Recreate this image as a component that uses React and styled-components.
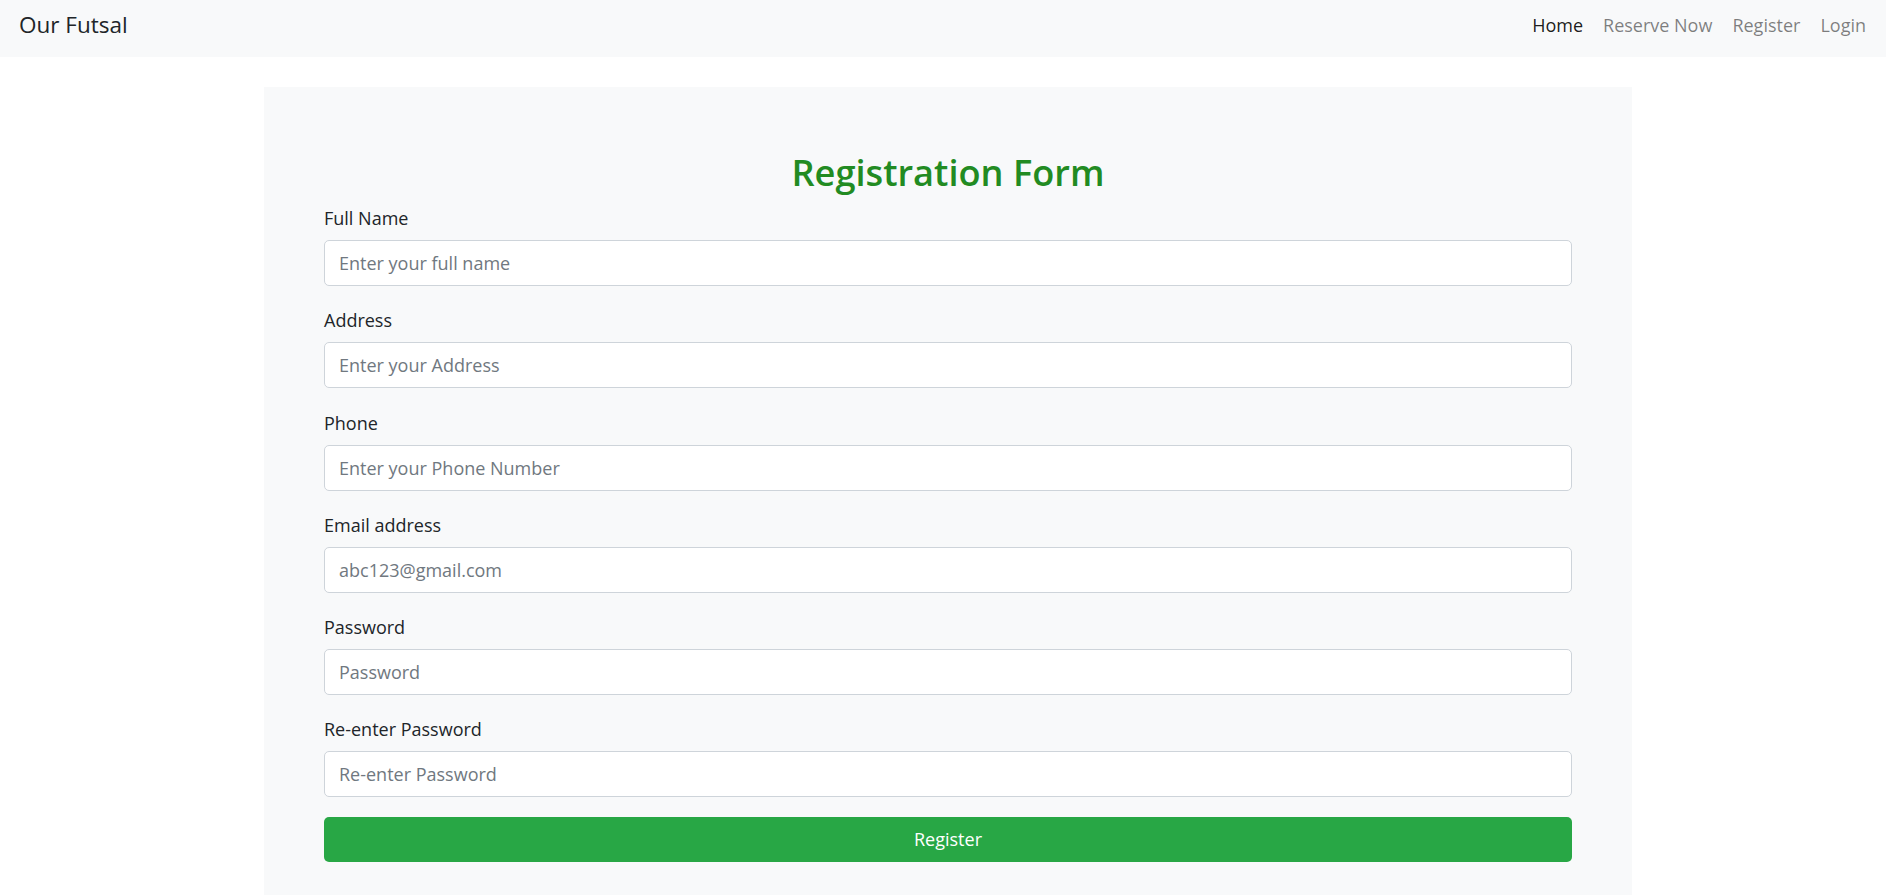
import React from "react";
import styled, { createGlobalStyle } from "styled-components";

const Global = createGlobalStyle`
  html, body { margin: 0; padding: 0; background: #ffffff; }
  body {
    font-family: "Open Sans", "Noto Sans", sans-serif;
    color: #212529;
    -webkit-font-smoothing: antialiased;
  }
  * { box-sizing: border-box; }
`;

const NavBar = styled.nav`
  height: 57px;
  background: #f8f9fa;
  display: flex;
  align-items: center;
  justify-content: space-between;
  padding: 0 20px 6px 19px;
`;

const Brand = styled.a`
  font-size: 22.5px;
  color: #212529;
  text-decoration: none;
  line-height: 1;
`;

const NavList = styled.ul`
  display: flex;
  gap: 20px;
  list-style: none;
  margin: 0;
  padding: 0;
`;

const NavLink = styled.a`
  font-size: 18px;
  line-height: 1;
  text-decoration: none;
  color: ${(p) => (p.$active ? "rgba(0,0,0,0.9)" : "rgba(0,0,0,0.5)")};
`;

const FormCard = styled.section`
  width: 1368px;
  margin: 30px 0 0 264px;
  background: #f8f9fa;
  padding: 61px 60px 40px;
`;

const Title = styled.h1`
  margin: 0 0 9px;
  text-align: center;
  font-size: 36.2px;
  font-weight: 600;
  line-height: 48px;
  color: #228b22;
`;

const Group = styled.div`
  margin-bottom: 21.3px;
`;

const Label = styled.label`
  display: block;
  font-size: 18px;
  line-height: 27px;
  margin-bottom: 8px;
  color: #212529;
`;

const Input = styled.input`
  display: block;
  width: 100%;
  height: 46px;
  padding: 0 14px;
  font-family: inherit;
  font-size: 18px;
  color: #212529;
  background: #ffffff;
  border: 1px solid #ced4da;
  border-radius: 5px;
  outline: none;
  &::placeholder { color: #707880; }
`;

const SubmitButton = styled.button`
  display: block;
  width: 100%;
  height: 45px;
  margin-top: -2px;
  border: none;
  border-radius: 5px;
  background: #28a745;
  color: #ffffff;
  font-family: inherit;
  font-size: 18px;
  cursor: pointer;
`;

const fields = [
  { label: "Full Name", placeholder: "Enter your full name", type: "text" },
  { label: "Address", placeholder: "Enter your Address", type: "text" },
  { label: "Phone", placeholder: "Enter your Phone Number", type: "text" },
  { label: "Email address", placeholder: "abc123@gmail.com", type: "email" },
  { label: "Password", placeholder: "Password", type: "password" },
  { label: "Re-enter Password", placeholder: "Re-enter Password", type: "password" },
];

export default function App() {
  return (
    <>
      <Global />
      <NavBar>
        <Brand href="#">Our Futsal</Brand>
        <NavList>
          <li><NavLink href="#" $active>Home</NavLink></li>
          <li><NavLink href="#">Reserve Now</NavLink></li>
          <li><NavLink href="#">Register</NavLink></li>
          <li><NavLink href="#">Login</NavLink></li>
        </NavList>
      </NavBar>
      <FormCard>
        <Title>Registration Form</Title>
        <form onSubmit={(e) => e.preventDefault()}>
          {fields.map((f) => (
            <Group key={f.label}>
              <Label>{f.label}</Label>
              <Input type={f.type} placeholder={f.placeholder} />
            </Group>
          ))}
          <SubmitButton type="submit">Register</SubmitButton>
        </form>
      </FormCard>
    </>
  );
}
